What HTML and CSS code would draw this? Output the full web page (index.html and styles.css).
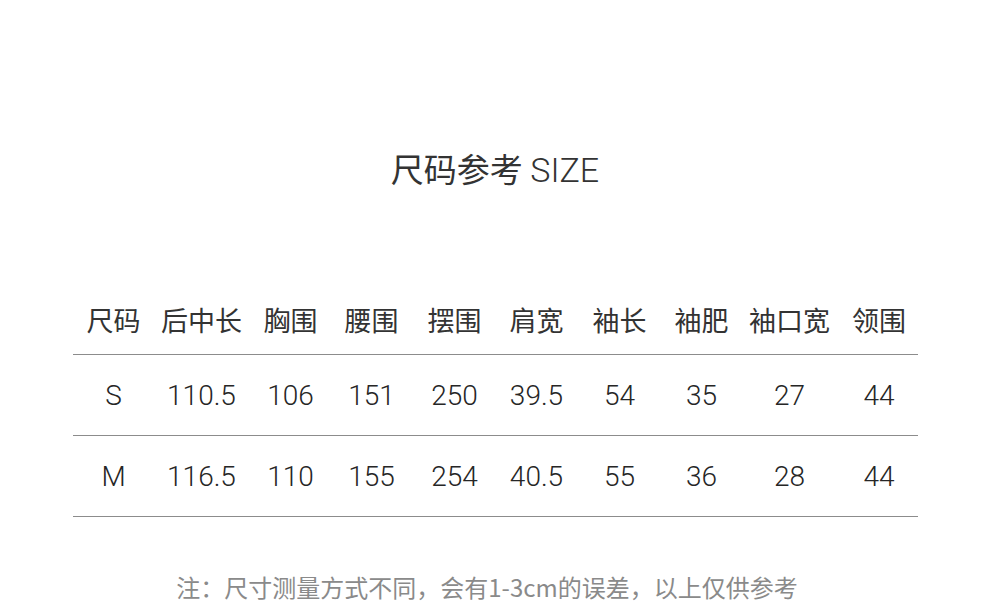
FILE: index.html
```html
<!DOCTYPE html>
<html lang="zh">
<head>
<meta charset="utf-8">
<link rel="stylesheet" href="styles.css">
</head>
<body>
<main class="page">
  <h1 class="title">尺码参考 <span class="latin">SIZE</span></h1>
  <div class="table">
    <div class="row head">
      <span>尺码</span><span>后中长</span><span>胸围</span><span>腰围</span><span>摆围</span><span>肩宽</span><span>袖长</span><span>袖肥</span><span>袖口宽</span><span>领围</span>
    </div>
    <div class="row">
      <span>S</span><span>110.5</span><span>106</span><span>151</span><span>250</span><span>39.5</span><span>54</span><span>35</span><span>27</span><span>44</span>
    </div>
    <div class="row">
      <span>M</span><span>116.5</span><span>110</span><span>155</span><span>254</span><span>40.5</span><span>55</span><span>36</span><span>28</span><span>44</span>
    </div>
  </div>
  <p class="note">注：尺寸测量方式不同，会有1-3cm的误差，以上仅供参考</p>
</main>
</body>
</html>
```
FILE: styles.css
```css
html, body {
  margin: 0;
  padding: 0;
  background: #fff;
}
.page {
  width: 990px;
  height: 601px;
  overflow: hidden;
  display: flex;
  flex-direction: column;
  align-items: center;
  font-family: Roboto, "Noto Sans CJK SC", sans-serif;
  color: #333;
}
.title {
  margin: 148px 0 0;
  height: 40px;
  line-height: 40px;
  font-family: "Noto Sans CJK SC", sans-serif;
  font-size: 33px;
  font-weight: 400;
  color: #333;
}
.title .latin {
  font-family: Roboto, sans-serif;
  font-weight: 300;
  font-size: 34px;
  color: #333;
}
.table {
  margin-top: 100px;
  width: 845px;
  display: flex;
  flex-direction: column;
}
.row {
  display: grid;
  grid-template-columns: 82px 94px 84px 78px 88px 76px 90px 74px 102px 77px;
  height: 80px;
  align-items: center;
  border-bottom: 1px solid #8c8c8c;
  font-size: 28px;
  font-weight: 300;
  color: #262626;
}
.row span {
  text-align: center;
  white-space: nowrap;
}
.row.head {
  height: 62px;
  padding-bottom: 4px;
  font-family: "Noto Sans CJK SC", sans-serif;
  font-size: 27px;
  font-weight: 400;
  color: #333;
}
.note {
  margin: 58px 16px 0 0;
  font-family: "Noto Sans CJK SC", sans-serif;
  font-size: 24px;
  line-height: 24px;
  color: #8a8a8a;
  white-space: nowrap;
}
```
